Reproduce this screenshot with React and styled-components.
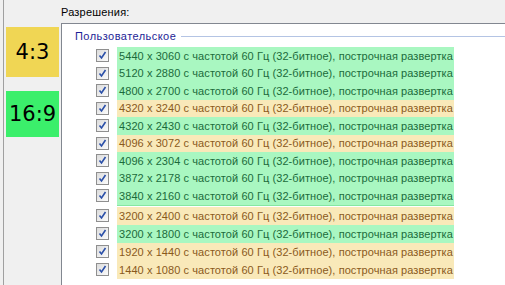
import React from "react";
import styled, { createGlobalStyle } from "styled-components";

const GlobalStyle = createGlobalStyle`
  html, body {
    margin: 0;
    padding: 0;
    background: #f0f0f0;
    overflow: hidden;
  }
  body {
    font-family: "Liberation Sans", "DejaVu Sans", sans-serif;
  }
`;

const Window = styled.div`
  display: flex;
  width: 505px;
  height: 285px;
  overflow: hidden;
`;

const Strip = styled.div`
  margin-left: 3px;
  width: 57px;
  border-left: 1px solid #a0a0a0;
  display: flex;
  flex-direction: column;
  align-items: flex-start;
  padding-top: 27px;
  gap: 14px;
`;

const Ratio = styled.div`
  margin-left: 2px;
  width: 53px;
  height: ${(p) => p.h}px;
  background: ${(p) => p.bg};
  display: flex;
  align-items: center;
  justify-content: center;
  font-family: "DejaVu Sans", sans-serif;
  font-size: 21px;
  color: #000;
`;

const Main = styled.div`
  flex: 1;
  display: flex;
  flex-direction: column;
  min-width: 0;
`;

const Caption = styled.div`
  height: 23px;
  font-size: 11px;
  letter-spacing: 0.2px;
  line-height: 24px;
  color: #000;
`;

const ListBox = styled.div`
  flex: 1;
  background: #fff;
  border: 1px solid #828790;
  border-right: none;
  border-bottom: none;
`;

const GroupHeader = styled.div`
  display: flex;
  align-items: center;
  height: 23px;
  padding-left: 13px;
  gap: 5px;
`;

const GroupTitle = styled.span`
  font-size: 11px;
  letter-spacing: 0.45px;
  color: #1e1e96;
  white-space: nowrap;
`;

const GroupLine = styled.div`
  flex: 1;
  height: 1px;
  background: #b4c4e4;
  margin-top: 1px;
`;

const Row = styled.div`
  display: flex;
  align-items: center;
  height: ${(p) => p.h}px;
`;

const Check = styled.span`
  box-sizing: border-box;
  margin-left: 34px;
  width: 13px;
  height: 13px;
  border: 1px solid #8f8f8f;
  background: linear-gradient(135deg, #dcdcdc, #fbfbfb);
  display: flex;
  align-items: center;
  justify-content: center;
  flex: none;
`;

const Label = styled.div`
  margin-left: 8px;
  width: 337px;
  height: 100%;
  box-sizing: border-box;
  padding-left: 2px;
  display: flex;
  align-items: center;
  font-size: 11px;
  letter-spacing: 0.08px;
  white-space: nowrap;
  background: ${(p) => (p.wide ? "#a9f7c1" : "#f9e9b9")};
  color: ${(p) => (p.wide ? "#1b6b3b" : "#8a5a1c")};
`;

const Divider = styled.div`
  margin-left: 55px;
  width: 337px;
  height: 1px;
  background: #86e7a2;
  margin-bottom: 1px;
`;

const CheckMark = () => (
  <svg width="9" height="9" viewBox="0 0 9 9">
    <path d="M1.5 4.5 L3.5 7 L7.5 1" fill="none" stroke="#2a4fa8" strokeWidth="1.6" />
  </svg>
);

const top = [
  ["5440 x 3060", true],
  ["5120 x 2880", true],
  ["4800 x 2700", true],
  ["4320 x 3240", false],
  ["4320 x 2430", true],
  ["4096 x 3072", false],
  ["4096 x 2304", true],
  ["3872 x 2178", true],
  ["3840 x 2160", true],
];

const bottom = [
  ["3200 x 2400", false],
  ["3200 x 1800", true],
  ["1920 x 1440", false],
  ["1440 x 1080", false],
];

const Item = ({ res, wide, h }) => (
  <Row h={h}>
    <Check>
      <CheckMark />
    </Check>
    <Label wide={wide}>
      {res} с частотой 60 Гц (32-битное), построчная развертка
    </Label>
  </Row>
);

export default function App() {
  return (
    <Window>
      <GlobalStyle />
      <Strip>
        <Ratio bg="#f0d654" h={50}>4:3</Ratio>
        <Ratio bg="#3bef6b" h={46}>16:9</Ratio>
      </Strip>
      <Main>
        <Caption>Разрешения:</Caption>
        <ListBox>
          <GroupHeader>
            <GroupTitle>Пользовательское</GroupTitle>
            <GroupLine />
          </GroupHeader>
          {top.map(([res, wide]) => (
            <Item key={res} res={res} wide={wide} h={17.5} />
          ))}
          <Divider />
          {bottom.map(([res, wide]) => (
            <Item key={res} res={res} wide={wide} h={18} />
          ))}
        </ListBox>
      </Main>
    </Window>
  );
}
